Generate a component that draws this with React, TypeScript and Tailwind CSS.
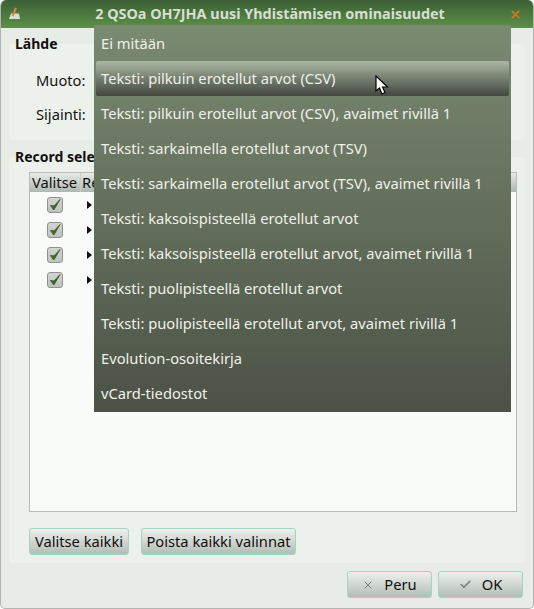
import React from "react";
import { X, Check } from "lucide-react";

const font = { fontFamily: '"Noto Sans", sans-serif' };

const options = [
  "Ei mitään",
  "Teksti: pilkuin erotellut arvot (CSV)",
  "Teksti: pilkuin erotellut arvot (CSV), avaimet rivillä 1",
  "Teksti: sarkaimella erotellut arvot (TSV)",
  "Teksti: sarkaimella erotellut arvot (TSV), avaimet rivillä 1",
  "Teksti: kaksoispisteellä erotellut arvot",
  "Teksti: kaksoispisteellä erotellut arvot, avaimet rivillä 1",
  "Teksti: puolipisteellä erotellut arvot",
  "Teksti: puolipisteellä erotellut arvot, avaimet rivillä 1",
  "Evolution-osoitekirja",
  "vCard-tiedostot",
];

function Btn({ className, children }: { className: string; children: React.ReactNode }) {
  return (
    <button className={`h-[27px] rounded-[3px] border border-[#a3d4c0] bg-gradient-to-b from-[#eef1ee] to-[#b3bdb5] text-[14.7px] text-[#10100f] flex items-center justify-center ${className}`}>
      {children}
    </button>
  );
}

function CheckRow() {
  return (
    <div className="h-[25px] flex items-center">
      <div className="ml-[17px] w-[16px] h-[16px] rounded-[3px] border border-[#8f928e] bg-gradient-to-b from-[#d2d4d1] to-[#bfc2be] flex items-center justify-center">
        <svg width="12" height="12" viewBox="0 0 12 12">
          <path d="M1.5 6.5 L4.8 11 L11 0.5 L5 7 Z" fill="#43632d" stroke="#43632d" strokeWidth="1" />
        </svg>
      </div>
      <svg className="ml-[24px]" width="5" height="8" viewBox="0 0 5 8">
        <path d="M0 0 L5 4 L0 8 Z" fill="#111" />
      </svg>
    </div>
  );
}

export default function App() {
  return (
    <div className="relative w-[534px] h-[609px] overflow-hidden bg-white" style={font}>
      <div className="w-full h-full flex flex-col rounded-t-[6px] rounded-b-[5px] border border-t-0 border-[#b2b5b0] bg-[#e8ece6] overflow-hidden">
        {/* Title bar */}
        <div className="h-[28px] shrink-0 bg-gradient-to-b from-[#3d5f35] to-[#5b9148] flex items-center pl-[8px] pr-[10px]">
          <svg width="12" height="14" viewBox="0 0 12 14">
            <path d="M0 12 L2 6.5 L10 6.5 L11 12 Z" fill="#d9dcd2" />
            <path d="M3.5 9 L7 1" stroke="#d9883c" strokeWidth="2" />
          </svg>
          <div className="flex-1 pl-[10px] text-center text-[14.4px] font-bold text-[#d8dfd2] -mt-[1px]">
            2 QSOa OH7JHA uusi Yhdistämisen ominaisuudet
          </div>
          <X size={13} strokeWidth={3} className="text-[#d97a1c] mr-[1px]" />
        </div>

        {/* Dialog body */}
        <div className="flex-1 flex flex-col px-[8px] pt-[8px]">
          <div className="h-[16px] pl-[6px] text-[14px] leading-[16px] font-bold text-[#111] relative z-10">Lähde</div>
          <div className="h-[96px] -mt-[8px] rounded-[4px] bg-[#edf1ec] pl-[27px] pt-[25px] text-[14.7px] text-[#111]">
            <div className="h-[34px]">Muoto:</div>
            <div>Sijainti:</div>
          </div>
          <div className="mt-[9px] h-[16px] pl-[6px] text-[14px] leading-[16px] font-bold text-[#111] relative z-10 w-[85px] overflow-hidden whitespace-nowrap">Record selection</div>
          <div className="h-[406px] -mt-[8px] rounded-[4px] bg-[#edf1ec] pt-[15px] pl-[20px] pr-[8px]">
            <div className="h-[340px] border border-[#b6b9b4] bg-[#f9fbf8]">
              <div className="h-[19px] flex bg-gradient-to-b from-[#e8ebe7] to-[#aeb7b0] text-[14.7px] leading-[19px] text-[#111]">
                <div className="w-[51px] pl-[2px] border-r border-[#c9cdc8]">Valitse</div>
                <div className="pl-[1px] w-[13px] overflow-hidden whitespace-nowrap">Record</div>
              </div>
              <div>
                <CheckRow />
                <CheckRow />
                <CheckRow />
                <CheckRow />
              </div>
            </div>
            <div className="mt-[16px] flex gap-[12px]">
              <Btn className="w-[100px]">Valitse kaikki</Btn>
              <Btn className="w-[155px]">Poista kaikki valinnat</Btn>
            </div>
          </div>
          <div className="mt-[8px] flex justify-end gap-[6px] pr-[2px]">
            <Btn className="w-[85px] gap-[10px]">
              <X size={12} className="text-[#787b78]" />
              Peru
            </Btn>
            <Btn className="w-[85px] gap-[10px]">
              <Check size={13} strokeWidth={3} className="text-[#787b78]" />
              OK
            </Btn>
          </div>
        </div>
      </div>

      {/* Open combo menu */}
      <div className="absolute z-20 left-[94px] top-[25px] w-[417px] h-[387px] bg-gradient-to-b from-[#7a8b72] to-[#4c5246] px-[2px] pt-[1px] text-[14.7px] text-[#eff1e8]">
        {options.map((o, i) => (
          <div
            key={o}
            className={`h-[35px] pl-[5px] flex items-center rounded-[2px] ${i === 1 ? "bg-gradient-to-b from-[#aab9a3] to-[#444840]" : ""}`}
          >
            {o}
          </div>
        ))}
      </div>

      {/* Mouse pointer */}
      <svg className="absolute z-30 left-[375px] top-[75px]" width="14" height="20" viewBox="0 0 14 20">
        <path d="M1 1 L1 16 L4.5 13 L7 19 L10 17.5 L7.5 12 L12.5 12 Z" fill="#fff" stroke="#000" strokeWidth="1.2" />
      </svg>
    </div>
  );
}
